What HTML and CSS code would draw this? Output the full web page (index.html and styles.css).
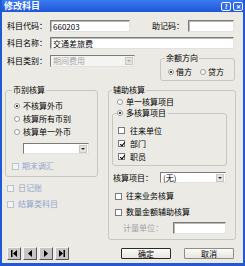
FILE: index.html
```html
<!DOCTYPE html>
<html lang="zh-CN">
<head>
    <meta charset="UTF-8">
    <title>修改科目</title>
    <link rel="stylesheet" href="styles.css">
</head>
<body>
<div class="win">
    <div class="title">
        <span class="title-text">修改科目</span>
        <span class="tbtn help">?</span>
        <span class="tbtn">✕</span>
    </div>
    <div class="main">
        <div class="row r1">
            <span class="lbl">科目代码：</span>
            <input class="field code" type="text" value="660203">
            <span class="lbl mnem-lbl">助记码：</span>
            <input class="field mnem" type="text" value="">
        </div>
        <div class="row r2">
            <span class="lbl">科目名称：</span>
            <input class="field name" type="text" value="交通差旅费">
        </div>
        <div class="r3">
            <div class="row">
                <span class="lbl">科目类别：</span>
                <div class="combo off kind"><span>期间费用</span><i class="arrow"></i></div>
            </div>
            <fieldset class="grp dir">
                <legend>余额方向</legend>
                <div class="dir-opts">
                    <label class="opt"><input type="radio" name="dir" checked>借方</label>
                    <label class="opt second"><input type="radio" name="dir">贷方</label>
                </div>
            </fieldset>
        </div>

        <div class="lower">
            <div class="left">
                <fieldset class="grp cur">
                    <legend>币别核算</legend>
                    <label class="opt line"><input type="radio" name="cur" checked>不核算外币</label>
                    <label class="opt line"><input type="radio" name="cur">核算所有币别</label>
                    <label class="opt line"><input type="radio" name="cur">核算单一外币</label>
                    <div class="combo cur-combo"><span></span><i class="arrow"></i></div>
                    <label class="opt chk off adjust"><input type="checkbox" disabled>期末调汇</label>
                </fieldset>
                <label class="opt chk off journal"><input type="checkbox" disabled>日记账</label>
                <label class="opt chk off journal"><input type="checkbox" disabled>结算类科目</label>
            </div>

            <fieldset class="grp aux">
                <legend>辅助核算</legend>
                <label class="opt single"><input type="radio" name="aux">单一核算项目</label>
                <fieldset class="grp multi">
                    <legend><label class="opt"><input type="radio" name="aux" checked>多核算项目</label></legend>
                    <label class="opt chk item"><input type="checkbox">往来单位</label>
                    <label class="opt chk item"><input type="checkbox" checked>部门</label>
                    <label class="opt chk item"><input type="checkbox" checked>职员</label>
                </fieldset>
                <div class="row aux-item">
                    <span class="lbl aux-lbl">核算项目：</span>
                    <div class="combo aux-combo"><span>(无)</span><i class="arrow"></i></div>
                </div>
                <label class="opt chk aux-chk first"><input type="checkbox">往来业务核算</label>
                <label class="opt chk aux-chk"><input type="checkbox">数量金额辅助核算</label>
                <div class="row unit">
                    <span class="lbl unit-lbl">计量单位：</span>
                    <input class="field unit-in" type="text" value="">
                </div>
            </fieldset>
        </div>

        <div class="bottom">
            <div class="nav">
                <button class="navbtn"><svg width="6" height="7" viewBox="0 0 6 7"><rect x="0" y="0" width="1.5" height="7"/><polygon points="6,0 6,7 2,3.5"/></svg></button>
                <button class="navbtn"><svg width="6" height="7" viewBox="0 0 6 7"><polygon points="5,0 5,7 1,3.5"/></svg></button>
                <button class="navbtn"><svg width="6" height="7" viewBox="0 0 6 7"><polygon points="1,0 1,7 5,3.5"/></svg></button>
                <button class="navbtn"><svg width="6" height="7" viewBox="0 0 6 7"><polygon points="0,0 0,7 4,3.5"/><rect x="4.5" y="0" width="1.5" height="7"/></svg></button>
            </div>
            <button class="btn ok">确定</button>
            <button class="btn">取消</button>
        </div>
    </div>
</div>
</body>
</html>
```

FILE: styles.css
```css
*{
    box-sizing: border-box;
    margin: 0;
    padding: 0;
}
body{
    margin: 0;
    font-family: "Noto Sans CJK SC", "Liberation Sans", sans-serif;
    font-size: 8px;
    line-height: 10px;
    color: #000;
    background: #fff;
}
.win{
    width: 245px;
    height: 266px;
    display: flex;
    flex-direction: column;
    padding: 0 2px 3px 2px;
    background: #2158d6;
}
.title{
    height: 12px;
    display: flex;
    align-items: center;
    padding: 0 0 0 2px;
    background: linear-gradient(#3b7af0, #1e56d6);
    color: #fff;
    font-weight: bold;
    font-size: 9px;
}
.tbtn{
    width: 10px;
    height: 9px;
    margin-left: 2px;
    border: 1px solid #fff;
    border-radius: 2px;
    background: #2f6be8;
    font-size: 6px;
    line-height: 7px;
    text-align: center;
}
.tbtn.help{
    margin-left: auto;
}
.main{
    flex: 1;
    background: #ebeae5;
    padding: 0 7px 0 3px;
}
.row{
    display: flex;
    align-items: center;
    height: 12px;
    padding-left: 2px;
}
.lbl{
    white-space: nowrap;
}
.r1{ margin-top: 8px; }
.r2{ margin-top: 5px; }
.r1 .lbl, .r2 .lbl, .r3 .lbl{ width: 43px; }
.field{
    height: 12px;
    border: 1px solid;
    border-color: #7b7b7b #e2e2e2 #e2e2e2 #7b7b7b;
    box-shadow: inset 1px 1px 0 #b8b8b8;
    background: #fff;
    font: inherit;
    color: #000;
    padding: 0 2px;
    outline: none;
    -webkit-appearance: none;
}
.code{ width: 80px; }
.lbl.mnem-lbl{
    width: 36px;
    margin-left: 22px;
}
.mnem{ width: 46px; }
.name{ width: 184px; }

.r3{
    display: flex;
    align-items: flex-start;
    margin-top: 6px;
}
.combo{
    display: flex;
    align-items: center;
    height: 12px;
    border: 1px solid;
    border-color: #7b7b7b #e2e2e2 #e2e2e2 #7b7b7b;
    background: #fff;
}
.combo span{
    flex: 1;
    padding-left: 2px;
}
.combo.off{
    background: #f4f4f2;
    color: #a6a6a6;
}
.arrow{
    width: 8px;
    height: 8px;
    margin-right: 1px;
    background: #e4e3dd;
    border: 1px solid #c9c8c0;
    display: flex;
    align-items: center;
    justify-content: center;
}
.arrow::after{
    content: "";
    border-left: 2px solid transparent;
    border-right: 2px solid transparent;
    border-top: 2px solid #222;
}
.combo.off .arrow::after{
    border-top-color: #aaa;
}
.kind{ width: 85px; }

.grp{
    border: 1px solid #c8c6be;
    border-radius: 3px;
    padding: 0;
    min-width: 0;
}
.grp legend{
    padding: 0 1px;
    line-height: 10px;
}
.dir{
    width: 75px;
    height: 28px;
    margin-left: 25px;
    margin-top: -2px;
}
.dir legend{ margin-left: 4px; }
.dir-opts{
    display: flex;
    margin-top: 4px;
    margin-left: 7px;
}
.opt{
    display: flex;
    align-items: center;
    gap: 2px;
    white-space: nowrap;
}
.opt.second{ margin-left: 8px; }

input[type="radio"]{
    -webkit-appearance: none;
    appearance: none;
    width: 6px;
    height: 6px;
    border: 1px solid #9a9a9a;
    border-radius: 50%;
    background: #fff;
    flex: none;
    display: flex;
    align-items: center;
    justify-content: center;
}
input[type="radio"]:checked::after{
    content: "";
    width: 2px;
    height: 2px;
    border-radius: 50%;
    background: #000;
}
input[type="checkbox"]{
    -webkit-appearance: none;
    appearance: none;
    width: 7px;
    height: 7px;
    border: 1px solid #7a7a7a;
    background: #fff;
    flex: none;
    position: relative;
}
input[type="checkbox"]:checked::after{
    content: "";
    position: absolute;
    left: 1.5px;
    top: -0.5px;
    width: 2px;
    height: 4px;
    border-right: 1.5px solid #000;
    border-bottom: 1.5px solid #000;
    transform: rotate(40deg);
}
input[type="checkbox"]:disabled{
    border-color: #b9c3d6;
    background: #f3f3f0;
}
.opt.off{
    color: #93a6cc;
}

.lower{
    display: flex;
    align-items: flex-start;
    margin-top: 4px;
}
.cur{
    width: 93px;
    height: 92px;
    padding: 4px 0 0 8px;
}
.cur legend{ margin-left: -2px; }
.opt.line{
    height: 13px;
    gap: 3px;
}
.cur-combo{
    width: 66px;
    height: 11px;
    margin-top: 5px;
    margin-left: 9px;
}
.adjust{
    height: 10px;
    margin-top: 7px;
    margin-left: -2px;
    gap: 3px;
}
.journal{
    height: 10px;
    margin-top: 6px;
    padding-left: 2px;
    gap: 4px;
}

.aux{
    width: 128px;
    height: 155px;
    margin-left: 10px;
}
.aux legend{ margin-left: 3px; }
.single{
    height: 11px;
    margin-top: 1px;
    padding-left: 8px;
    gap: 3px;
}
.multi{
    width: 115px;
    height: 58px;
    margin-top: 1px;
    margin-left: 3px;
    padding: 0 0 0 5px;
}
.multi legend{
    margin-left: -1px;
    padding: 0 2px 0 0;
}
.multi legend .opt{ gap: 3px; }
.opt.item{
    height: 13px;
    gap: 5px;
}
.opt.item:first-of-type{ margin-top: 6px; }
.aux-item{
    height: 11px;
    margin-top: 6px;
    padding-left: 4px;
}
.aux-lbl{ width: 47px; }
.aux-combo{
    width: 66px;
    height: 11px;
}
.aux-chk{
    height: 10px;
    margin-top: 6px;
    padding-left: 6px;
    gap: 4px;
}
.aux-chk.first{ margin-top: 8px; }
.unit{
    margin-top: 5px;
    padding-left: 14px;
}
.unit-lbl{
    width: 50px;
    color: #a4a4a4;
}
.unit-in{ width: 53px; }

.bottom{
    display: flex;
    align-items: center;
    margin-top: 7px;
    padding: 0 2px;
}
.nav{
    display: flex;
    gap: 2px;
    margin-right: auto;
}
.navbtn{
    width: 14px;
    height: 13px;
    border: 1px solid;
    border-color: #f4f4f4 #555 #555 #f4f4f4;
    background: #c6c6c4;
    display: flex;
    align-items: center;
    justify-content: center;
}
.navbtn svg{
    fill: #000;
}
.btn{
    width: 50px;
    height: 11px;
    margin-left: 13px;
    border: 1px solid #8c8c8c;
    border-radius: 1px;
    background: linear-gradient(#fbfbf9, #e6e5df);
    font: inherit;
    line-height: 9px;
    color: #000;
}
.btn.ok{
    border: 1.5px solid #2a2a2a;
}
```
